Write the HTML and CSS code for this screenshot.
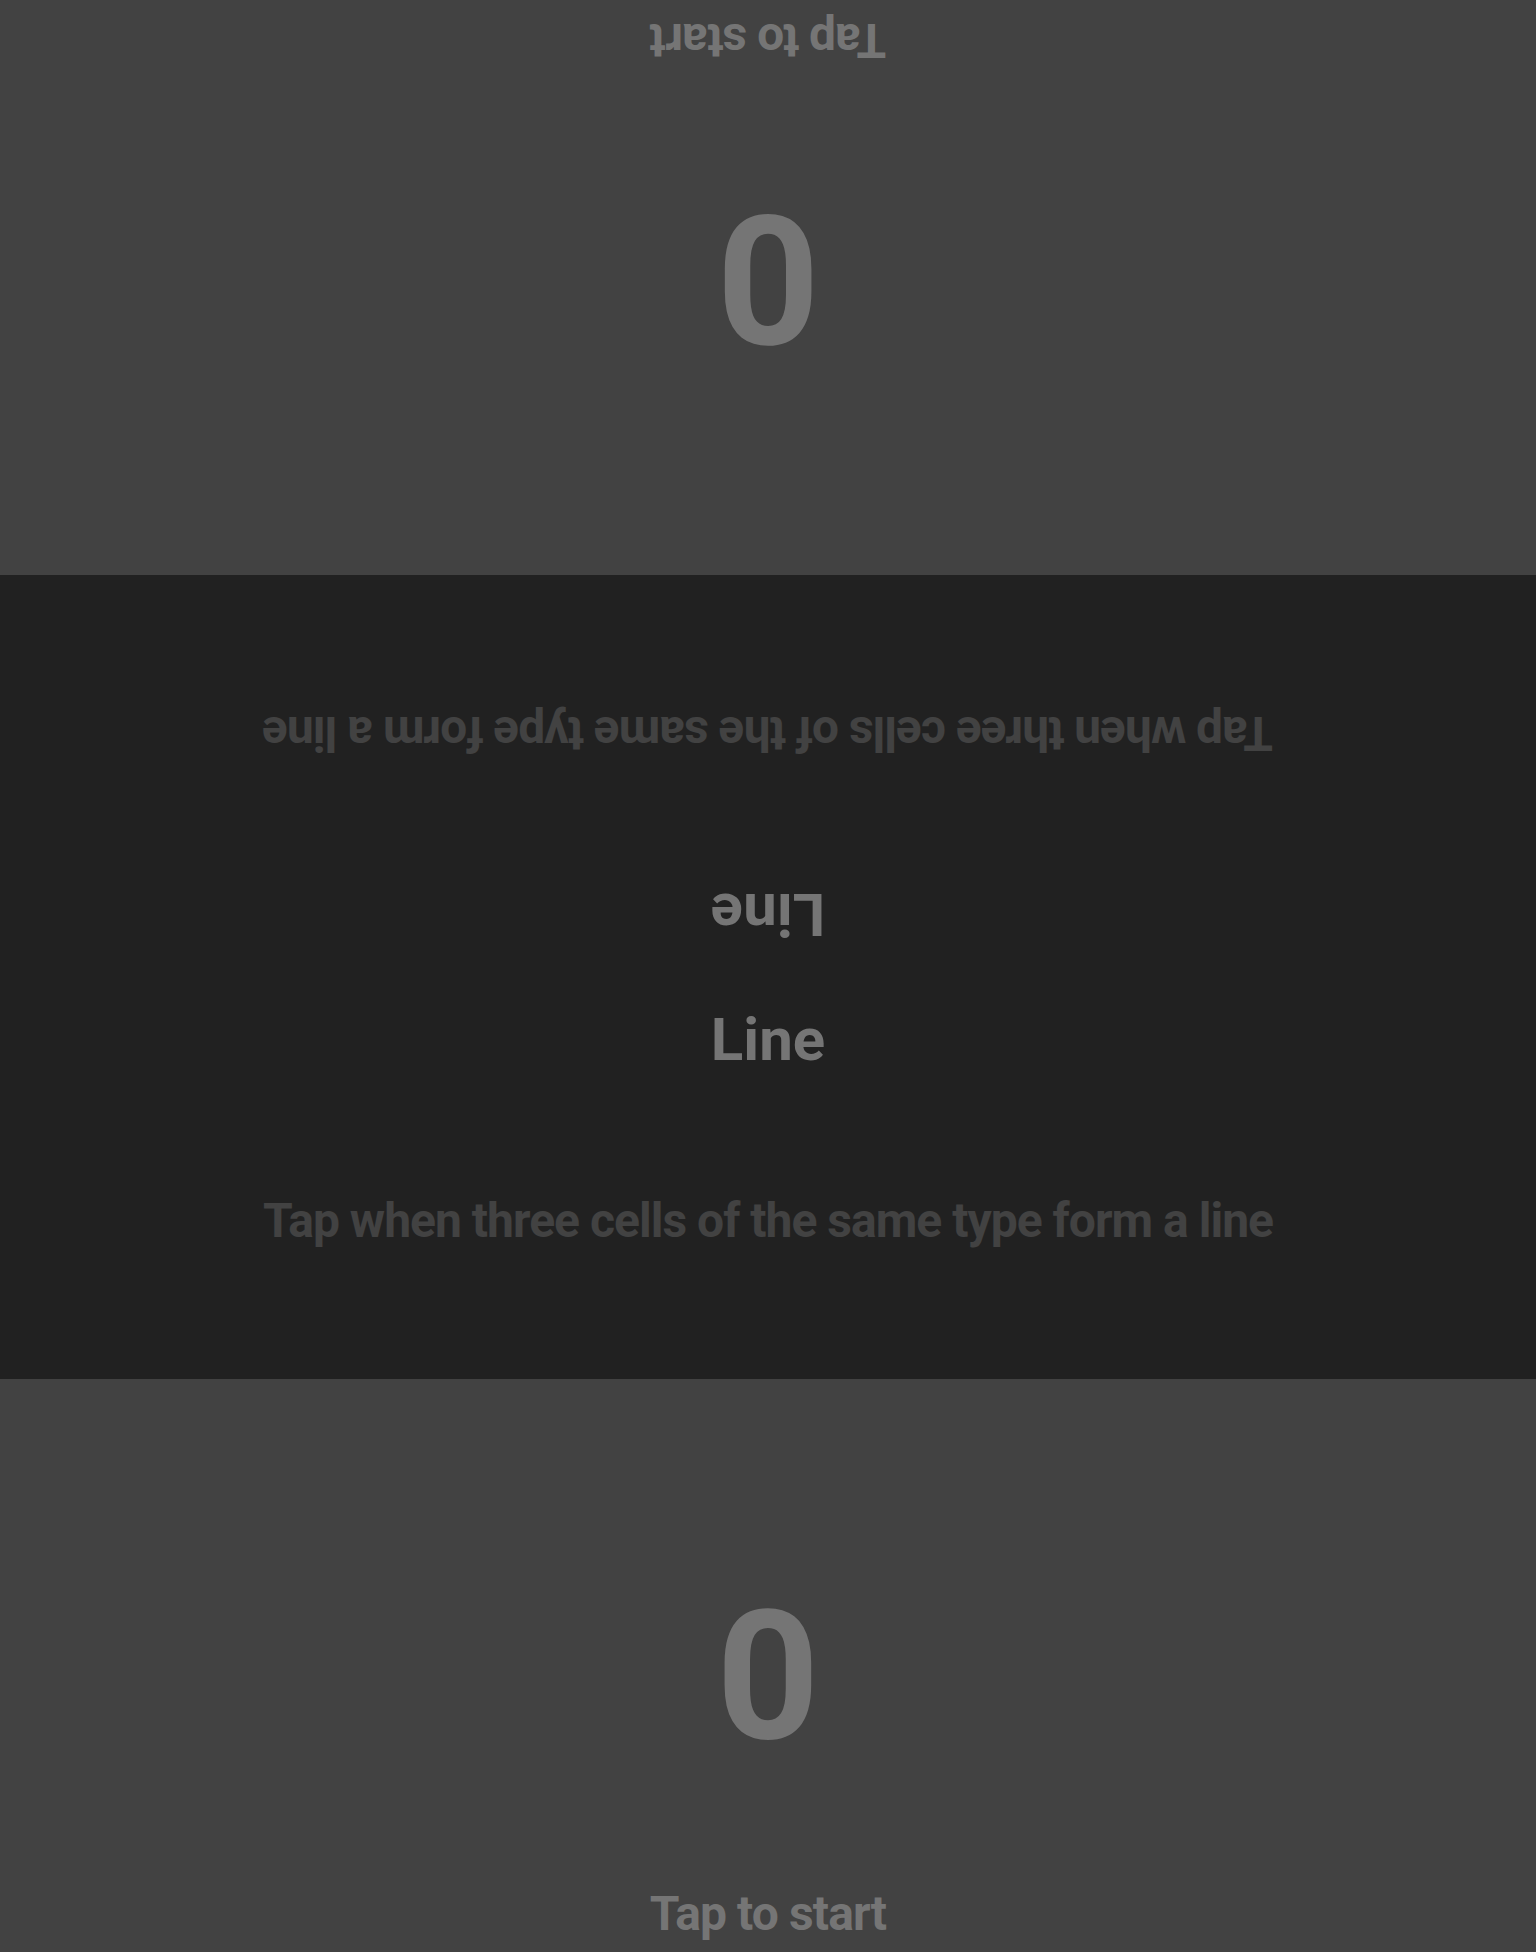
FILE: index.html
```html
<!DOCTYPE html>
<html lang="en">
<head>
<meta charset="utf-8">
<title>Line</title>
<link rel="stylesheet" href="styles.css">
</head>
<body>
<div class="app">
  <section class="player player-top">
    <div class="score">0</div>
    <div class="tap">Tap to start</div>
  </section>
  <section class="board">
    <div class="half half-flipped">
      <div class="title">Line</div>
      <div class="desc">Tap when three cells of the same type form a line</div>
    </div>
    <div class="half">
      <div class="title">Line</div>
      <div class="desc">Tap when three cells of the same type form a line</div>
    </div>
  </section>
  <section class="player player-bottom">
    <div class="score">0</div>
    <div class="tap">Tap to start</div>
  </section>
</div>
</body>
</html>
```
FILE: styles.css
```css
html, body {
  margin: 0;
  padding: 0;
  background: #424242;
}
body {
  font-family: Roboto, "Noto Sans", "Liberation Sans", sans-serif;
  font-weight: 700;
}
.app {
  display: flex;
  flex-direction: column;
  width: 1536px;
  height: 1952px;
}
.player {
  background: #424242;
  color: #757575;
  display: flex;
  flex-direction: column;
  align-items: center;
  box-sizing: border-box;
}
.player-top {
  height: 575px;
  transform: rotate(180deg);
  padding-bottom: 12px;
}
.player-bottom {
  height: 573px;
  padding-bottom: 10px;
}
.score {
  font-size: 180px;
  line-height: 211px;
  height: 211px;
  margin-top: 192px;
}
.tap {
  font-size: 48px;
  line-height: 56px;
  letter-spacing: -0.9px;
  margin-top: auto;
}
.board {
  background: #212121;
  height: 804px;
  display: flex;
  flex-direction: column;
}
.half {
  flex: 1;
  display: flex;
  flex-direction: column;
  align-items: center;
  padding-top: 28px;
}
.half-flipped {
  transform: rotate(180deg);
}
.title {
  font-size: 60px;
  line-height: 70px;
  color: #757575;
}
.desc {
  font-size: 48px;
  line-height: 56px;
  letter-spacing: -0.98px;
  color: #424242;
  margin-top: 118px;
  white-space: nowrap;
}
```
